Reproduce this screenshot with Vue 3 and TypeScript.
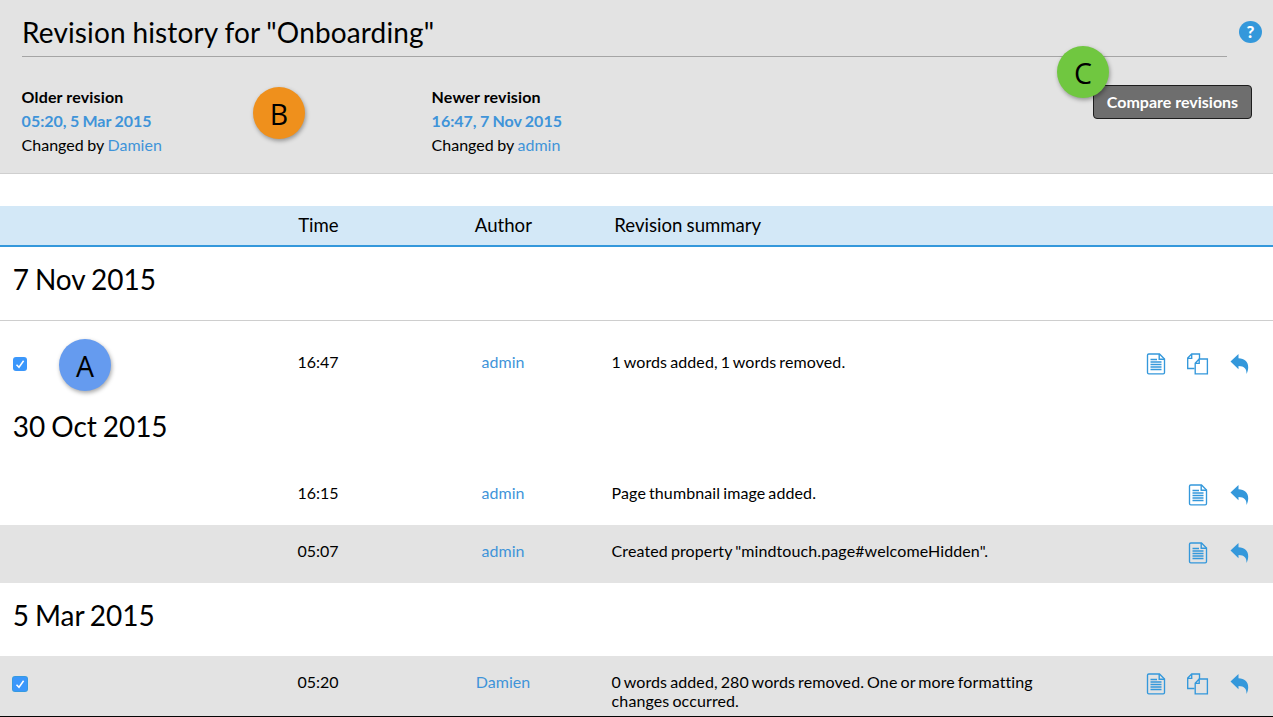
<script setup lang="ts">
interface Revision {
  time: string
  author: string
  summary: string
  checked?: boolean
  focused?: boolean
  shaded?: boolean
  compare?: boolean
}
interface Group {
  date: string
  ruled?: boolean
  revisions: Revision[]
}
const selected = [
  { label: 'Older revision', date: '05:20, 5 Mar 2015', author: 'Damien' },
  { label: 'Newer revision', date: '16:47, 7 Nov 2015', author: 'admin' },
]
const groups: Group[] = [
  {
    date: '7 Nov 2015',
    ruled: true,
    revisions: [
      { time: '16:47', author: 'admin', summary: '1 words added, 1 words removed.', checked: true, compare: true },
    ],
  },
  {
    date: '30 Oct 2015',
    revisions: [
      { time: '16:15', author: 'admin', summary: 'Page thumbnail image added.' },
      { time: '05:07', author: 'admin', summary: 'Created property "mindtouch.page#welcomeHidden".', shaded: true },
    ],
  },
  {
    date: '5 Mar 2015',
    revisions: [
      {
        time: '05:20',
        author: 'Damien',
        summary: '0 words added, 280 words removed. One or more formatting changes occurred.',
        checked: true,
        focused: true,
        shaded: true,
        compare: true,
      },
    ],
  },
]
</script>

<template>
  <main class="page">
    <header class="top">
      <h1><span class="title">Revision history for "Onboarding"</span></h1>
      <span class="help">?</span>
      <div class="selection">
        <section v-for="item in selected" :key="item.label" class="pick">
          <div class="label">{{ item.label }}</div>
          <div><a class="date">{{ item.date }}</a></div>
          <div class="by">Changed by <a>{{ item.author }}</a></div>
        </section>
        <button class="compare" type="button">Compare revisions</button>
      </div>
      <span class="badge b">B</span>
      <span class="badge c">C</span>
    </header>

    <div class="columns head">
      <span></span>
      <span class="mid">Time</span>
      <span class="mid">Author</span>
      <span class="headsum">Revision summary</span>
    </div>

    <section v-for="group in groups" :key="group.date">
      <h2 :class="{ ruled: group.ruled }">{{ group.date }}</h2>
      <div v-for="rev in group.revisions" :key="rev.time" class="columns row" :class="{ shaded: rev.shaded }">
        <span class="pickcell">
          <span v-if="rev.checked" class="check" :class="{ focused: rev.focused }" role="checkbox" aria-checked="true">
            <svg width="14" height="14" viewBox="0 0 14 14"><path d="M3.5 7.700 6 10.300 10.600 3.800" fill="none" stroke="#fff" stroke-width="1.500" /></svg>
          </span>
        </span>
        <span class="mid">{{ rev.time }}</span>
        <span class="mid"><a>{{ rev.author }}</a></span>
        <span class="summary">{{ rev.summary }}</span>
        <span class="actions">
          <svg class="doc" width="20" height="22" viewBox="0 0 20 22" fill="none" stroke="#3498db">
            <path d="M1.800 1h10.700l5 5v13.500q0 1.300-1.300 1.300H1.800Q.5 20.800.5 19.500V2.300Q.5 1 1.800 1Z" stroke-width="1.350" />
            <path d="M12.200 1v5.300h5.300" stroke-width="1.400" />
            <path d="M3.500 6.500h6.500M3.500 9h11M3.500 11.500h11M3.500 14h11M3.500 16.500h11" stroke-width="1.350" />
          </svg>
          <svg v-if="rev.compare" class="copy" width="22" height="22" viewBox="0 0 22 22" fill="none" stroke="#3498db" stroke-width="1.350">
            <path d="M7.500 15.500H.7V5l4-4h7.800v5M4.700 1v4.300H.7" />
            <path d="M8.200 10.300 12.200 6h8.200v14.800H8.200ZM12.200 6v4.300h-4" />
          </svg>
          <svg class="revert" width="18" height="20" viewBox="0 0 18 20">
            <path d="M-.5 7.500 7.500 0v4.300c6 .2 9.700 3.300 9.700 8.900 0 2.400-.7 4.700-1.700 6.800.3-5-2-8.100-8-8.100v3.400Z" fill="#3498db" />
          </svg>
        </span>
      </div>
      <div v-if="group.ruled" class="badge a">A</div>
    </section>
    <div class="edge"></div>
  </main>
</template>

<style>
body { margin: 0; background: #fff; }
</style>

<style scoped>
.page {
  position: relative;
  width: 1273px;
  height: 717px;
  overflow: hidden;
  font: 16px/19px Lato, sans-serif;
  font-variant-ligatures: none;
  color: #000;
  background: #fff;
}
a { color: #3f94d9; text-decoration: none; }
.top {
  position: relative;
  box-sizing: border-box;
  height: 174px;
  margin-bottom: 32px;
  padding: 9px 21px 0 22px;
  background: #e3e3e3;
  border-bottom: 1px solid #cfcfcf;
}
h1 {
  box-sizing: border-box;
  height: 48px;
  margin: 0 25px 0 0;
  border-bottom: 1px solid #a5a5a5;
  font-size: 28px;
  line-height: 47px;
  font-weight: 400;
  letter-spacing: .14px;
  word-spacing: -.6px;
}
.help {
  position: absolute;
  left: 1239px;
  top: 21px;
  width: 23px;
  height: 22px;
  border-radius: 50%;
  background: #3498db;
  color: #fff;
  font-size: 17px;
  line-height: 22px;
  font-weight: 900;
  text-align: center;
}
.selection { display: flex; padding-top: 28px; }
.pick { width: 410px; line-height: 24px; text-indent: -.4px; }
.label, .date { font-weight: 700; }
.label { letter-spacing: .14px; }
.date { word-spacing: -.6px; }
.by { word-spacing: -.5px; }
.compare {
  box-sizing: border-box;
  width: 159px;
  height: 34px;
  margin-left: auto;
  padding: 0;
  border: 1px solid #1d1d1d;
  border-radius: 4px;
  background: #6e6e6e;
  color: #fff;
  font: 700 16px/30px Lato, sans-serif;
}
.badge {
  position: absolute;
  width: 52px;
  height: 52px;
  border-radius: 50%;
  box-shadow: 1px 2px 4px rgba(0, 0, 0, .35);
  font: 28.5px/54px "Open Sans", sans-serif;
  text-align: center;
}
.a { left: 59px; top: 339px; background: #659bef; }
.b { left: 253px; top: 87px; background: #ef901c; }
.c { left: 1057px; top: 46px; background: #70c740; }
.columns { display: grid; grid-template-columns: 226px 184px 186px 450px 1fr; }
.mid { text-align: center; }
.head {
  box-sizing: border-box;
  height: 41px;
  border-bottom: 2px solid #3498db;
  background: #d3e8f7;
  font-size: 18.6px;
  line-height: 38px;
}
.head .mid { text-indent: .8px; }
.headsum { padding-left: 18.3px; word-spacing: -.6px; }
h2 {
  box-sizing: border-box;
  height: 73px;
  margin: 0;
  padding-left: 12.8px;
  font-size: 28px;
  line-height: 65px;
  font-weight: 400;
  word-spacing: -1.3px;
}
h2.ruled { height: 74px; margin-bottom: 15px; border-bottom: 1px solid #cecece; }
.row { box-sizing: border-box; min-height: 58px; padding-top: 16px; }
section:last-of-type > .row { min-height: 61px; }
.shaded { background: #e3e3e3; }
.pickcell { padding: 5px 0 0 13px; }
.check { display: block; width: 14px; height: 14px; border-radius: 3px; background: #3b97fb; }
.check svg { display: block; }
.check.focused { border-radius: 2px; box-shadow: 0 0 0 1px #369ae0; }
.summary { padding-left: 15.6px; letter-spacing: .11px; word-spacing: -1.2px; }
.actions { display: flex; justify-content: flex-end; padding: 1px 24px 0 0; }
.doc { margin-right: 22px; }
.copy { margin-right: 22px; margin-left: -2px; }
.doc, .copy, .revert { overflow: visible; }
.revert { margin-top: 1px; }
.edge { position: absolute; left: 0; right: 0; bottom: 0; height: 1px; background: #050505; }
</style>
